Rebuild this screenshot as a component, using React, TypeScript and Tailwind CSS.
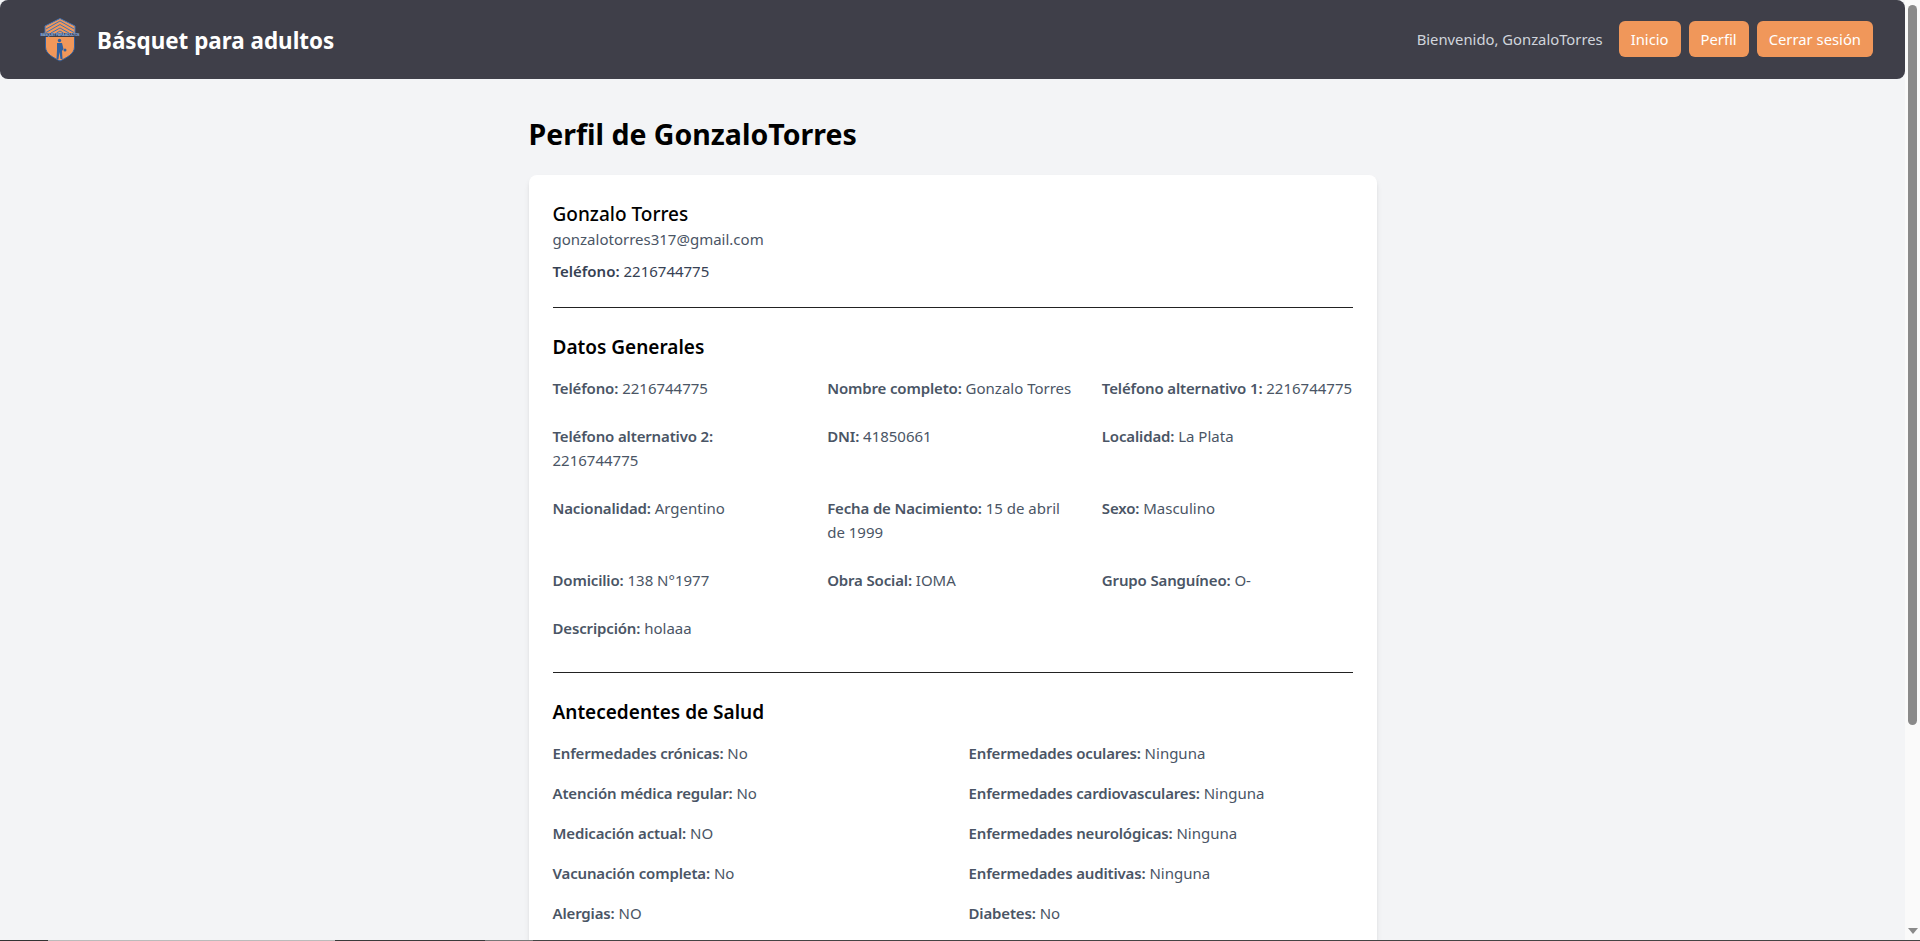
const sans = { fontFamily: '"Noto Sans", sans-serif' }

const Field = ({ label, value, stacked }: { label: string; value: string; stacked?: boolean }) => (
  <p className="text-[15px] leading-6 text-gray-600">
    <span className="font-semibold tracking-[-0.15px]">{label}:</span>{' '}
    {stacked ? <span className="block">{value}</span> : value}
  </p>
)

const Logo = () => (
  <svg viewBox="0 0 40 44" className="w-10 h-11 shrink-0">
    {/* shield */}
    <path d="M5.5 18 H34.5 V29 C34.5 36 26 40 20 43 C14 40 5.5 36 5.5 29 Z" fill="#f0975a" stroke="#2f5f9e" strokeWidth="1" />
    {/* roof */}
    <path d="M20 0.5 L35 8 V16 H5 V8 Z" fill="#f0975a" stroke="#3d73b8" strokeWidth="1" />
    <path d="M20 3 L6 11 M20 3 L34 11 M20 6.5 L6 14.5 M20 6.5 L34 14.5 M20 10 L11 15 M20 10 L29 15 M20 13 L16.5 15 M20 13 L23.5 15" stroke="#3d73b8" strokeWidth="1" fill="none" />
    {/* band */}
    <rect x="0" y="15" width="40" height="4" fill="#3f3f49" />
    <text x="20" y="18.4" textAnchor="middle" fontSize="3.6" fontWeight="700" fill="#86aee0" fontFamily="Liberation Sans, sans-serif" textLength="39">
      BÁSQUET PARA ADULTOS
    </text>
    {/* player */}
    <circle cx="19.5" cy="22.5" r="1.7" fill="#2f5f9e" />
    <path d="M17 25 H22 L23.5 31 L22 33 L22.5 41 H20.5 L19.5 34 L18.5 41 H16.5 L17 32 Z" fill="#2f5f9e" />
    <circle cx="25" cy="32" r="1.5" fill="#2f5f9e" />
  </svg>
)

const Navbar = () => (
  <header className="flex items-center justify-between h-[79px] bg-[#3f3f49] rounded-lg pl-10 pr-8">
    <div className="flex items-center gap-[17px]">
      <Logo />
      <span className="pt-0.5 text-[22.4px] font-bold text-white">Básquet para adultos</span>
    </div>
    <div className="flex items-center gap-2 mb-px">
      <span className="text-[14.8px] text-gray-300 mr-2">Bienvenido, GonzaloTorres</span>
      <button className="bg-[#f0975a] text-white text-[14.8px] leading-6 rounded-md px-3 py-1.5">Inicio</button>
      <button className="bg-[#f0975a] text-white text-[14.8px] leading-6 rounded-md px-3 py-1.5">Perfil</button>
      <button className="bg-[#f0975a] text-white text-[14.8px] leading-6 rounded-md px-3 py-1.5">Cerrar sesión</button>
    </div>
  </header>
)

const Scrollbar = () => (
  <aside className="flex flex-col items-center w-[15px] shrink-0 bg-[#fafafa] pt-[5px] pb-[7px]">
    <div className="w-[9px] h-[720px] rounded-full bg-[#8a8a8a]" />
    <div className="mt-auto w-0 h-0 border-x-[5px] border-x-transparent border-t-[6px] border-t-[#8a8a8a]" />
  </aside>
)

export default function App() {
  return (
    <div className="relative flex h-screen overflow-hidden bg-gray-100" style={sans}>
      <div className="flex-1 min-w-0">
        <Navbar />

        <main className="max-w-4xl mx-auto px-6 pt-[37px]">
          <h1 className="text-[28.5px] leading-9 font-bold text-black mb-[23px]">Perfil de GonzaloTorres</h1>

          <div className="bg-white rounded-lg shadow-md p-6 pb-[270px]">
            <h2 className="pt-px -mb-px text-[19px] leading-7 font-medium text-black">Gonzalo Torres</h2>
            <p className="text-[15px] leading-6 text-gray-600">gonzalotorres317@gmail.com</p>
            <p className="mt-2 text-[15px] leading-6 text-gray-700">
              <span className="font-semibold">Teléfono:</span> 2216744775
            </p>

            <hr className="my-6 border-[#222222]" />

            {/* Datos generales */}
            <h3 className="pt-px mb-[15px] text-[19px] leading-7 font-semibold text-black">Datos Generales</h3>
            <div className="grid grid-cols-3 gap-6">
              <Field label="Teléfono" value="2216744775" />
              <Field label="Nombre completo" value="Gonzalo Torres" />
              <Field label="Teléfono alternativo 1" value="2216744775" />
              <Field label="Teléfono alternativo 2" value="2216744775" stacked />
              <Field label="DNI" value="41850661" />
              <Field label="Localidad" value="La Plata" />
              <Field label="Nacionalidad" value="Argentino" />
              <Field label="Fecha de Nacimiento" value="15 de abril de 1999" />
              <Field label="Sexo" value="Masculino" />
              <Field label="Domicilio" value="138 N°1977" />
              <Field label="Obra Social" value="IOMA" />
              <Field label="Grupo Sanguíneo" value="O-" />
              <Field label="Descripción" value="holaaa" />
            </div>

            <hr className="mt-8 mb-6 border-[#222222]" />

            {/* Antecedentes */}
            <h3 className="pt-px mb-[15px] text-[19px] leading-7 font-semibold text-black">Antecedentes de Salud</h3>
            <div className="grid grid-cols-2 gap-x-8 gap-y-4">
              <Field label="Enfermedades crónicas" value="No" />
              <Field label="Enfermedades oculares" value="Ninguna" />
              <Field label="Atención médica regular" value="No" />
              <Field label="Enfermedades cardiovasculares" value="Ninguna" />
              <Field label="Medicación actual" value="NO" />
              <Field label="Enfermedades neurológicas" value="Ninguna" />
              <Field label="Vacunación completa" value="No" />
              <Field label="Enfermedades auditivas" value="Ninguna" />
              <Field label="Alergias" value="NO" />
              <Field label="Diabetes" value="No" />
            </div>
          </div>
        </main>
      </div>

      <Scrollbar />

      {/* strip along the bottom edge of the window */}
      <div className="absolute bottom-0 inset-x-0 flex h-px bg-[#444444]">
        <div className="w-12 bg-[#333333]" />
        <div className="w-[287px] bg-[#bbbbbb]" />
        <div className="w-[150px] bg-[#3a3a3a]" />
        <div className="w-12 bg-[#777777]" />
      </div>
    </div>
  )
}
